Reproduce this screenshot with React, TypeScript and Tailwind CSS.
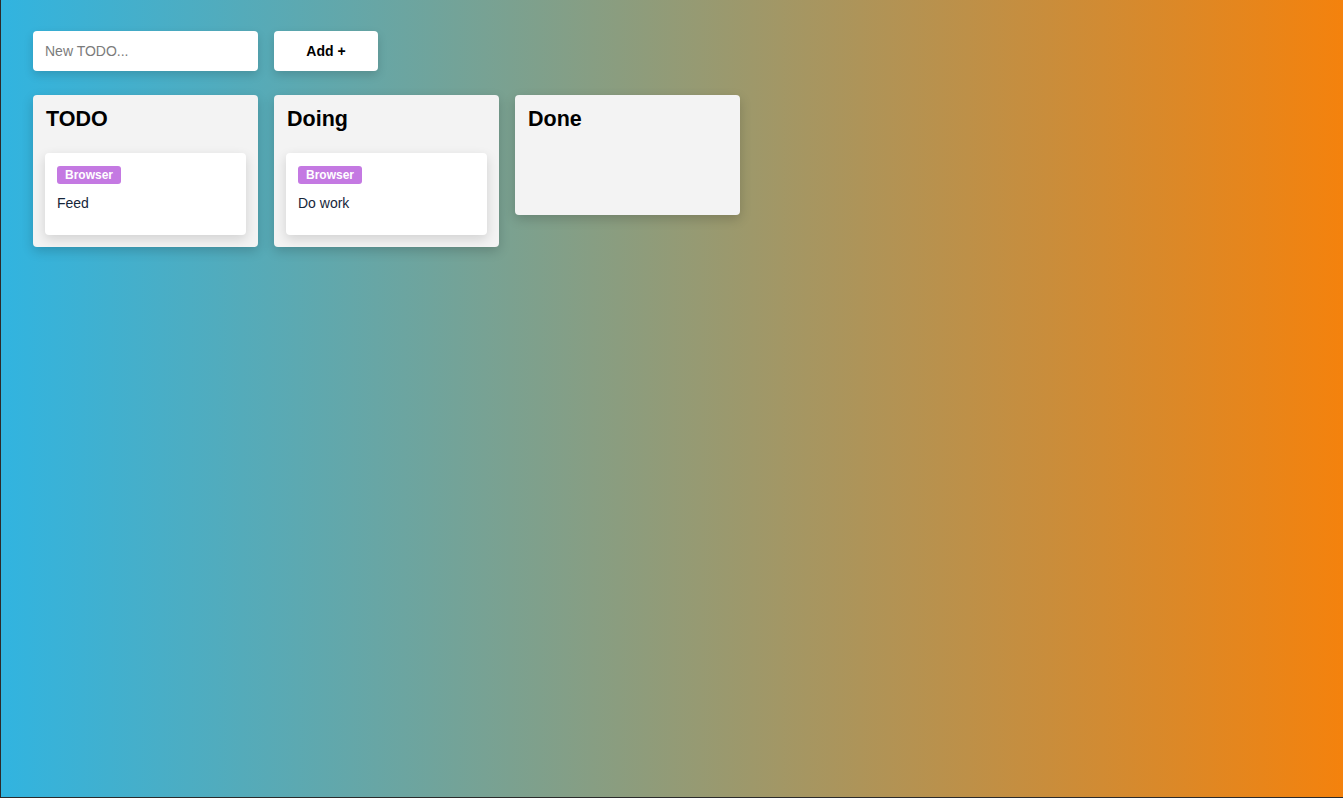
const columns = [
  { title: "TODO", items: [{ tag: "Browser", text: "Feed" }] },
  { title: "Doing", items: [{ tag: "Browser", text: "Do work" }] },
  { title: "Done", items: [] as { tag: string; text: string }[] },
];

export default function App() {
  return (
    <div className="min-h-[798px] border-b border-l border-[#2b2b2b] bg-[linear-gradient(to_right,#31b4e0,#f4820d)] pl-8 pt-[31px] font-['Liberation_Sans',Arial,sans-serif]">
      <div className="flex gap-4">
        <input
          className="h-10 w-[225px] rounded bg-white px-3 text-sm text-gray-800 shadow-[0_4px_10px_rgba(0,0,0,0.15)] outline-none placeholder:text-[#7b7b7b]"
          placeholder="New TODO..."
        />
        <button className="h-10 w-[104px] rounded bg-white text-sm font-bold text-black shadow-[0_4px_10px_rgba(0,0,0,0.15)]">
          Add +
        </button>
      </div>

      <div className="mt-6 flex items-start gap-4">
        {columns.map((col) => (
          <div
            key={col.title}
            className="min-h-[120px] w-[225px] rounded bg-[#f3f3f3] px-3 pb-3 pt-[10px] shadow-[0_4px_12px_rgba(0,0,0,0.18)]"
          >
            <h2 className="mb-5 pl-px text-[21.5px] leading-[28px] font-bold text-black">{col.title}</h2>
            {col.items.map((it) => (
              <div
                key={it.text}
                className="rounded bg-white px-3 pb-[22px] pt-[13px] shadow-[0_4px_12px_rgba(0,0,0,0.14)]"
              >
                <span className="block h-[18px] w-fit rounded-[3px] bg-[#c479e2] px-2 text-xs leading-[18px] font-bold text-white">
                  {it.tag}
                </span>
                <p className="mt-[9px] text-sm leading-5 text-[#16263a]">{it.text}</p>
              </div>
            ))}
          </div>
        ))}
      </div>
    </div>
  );
}
